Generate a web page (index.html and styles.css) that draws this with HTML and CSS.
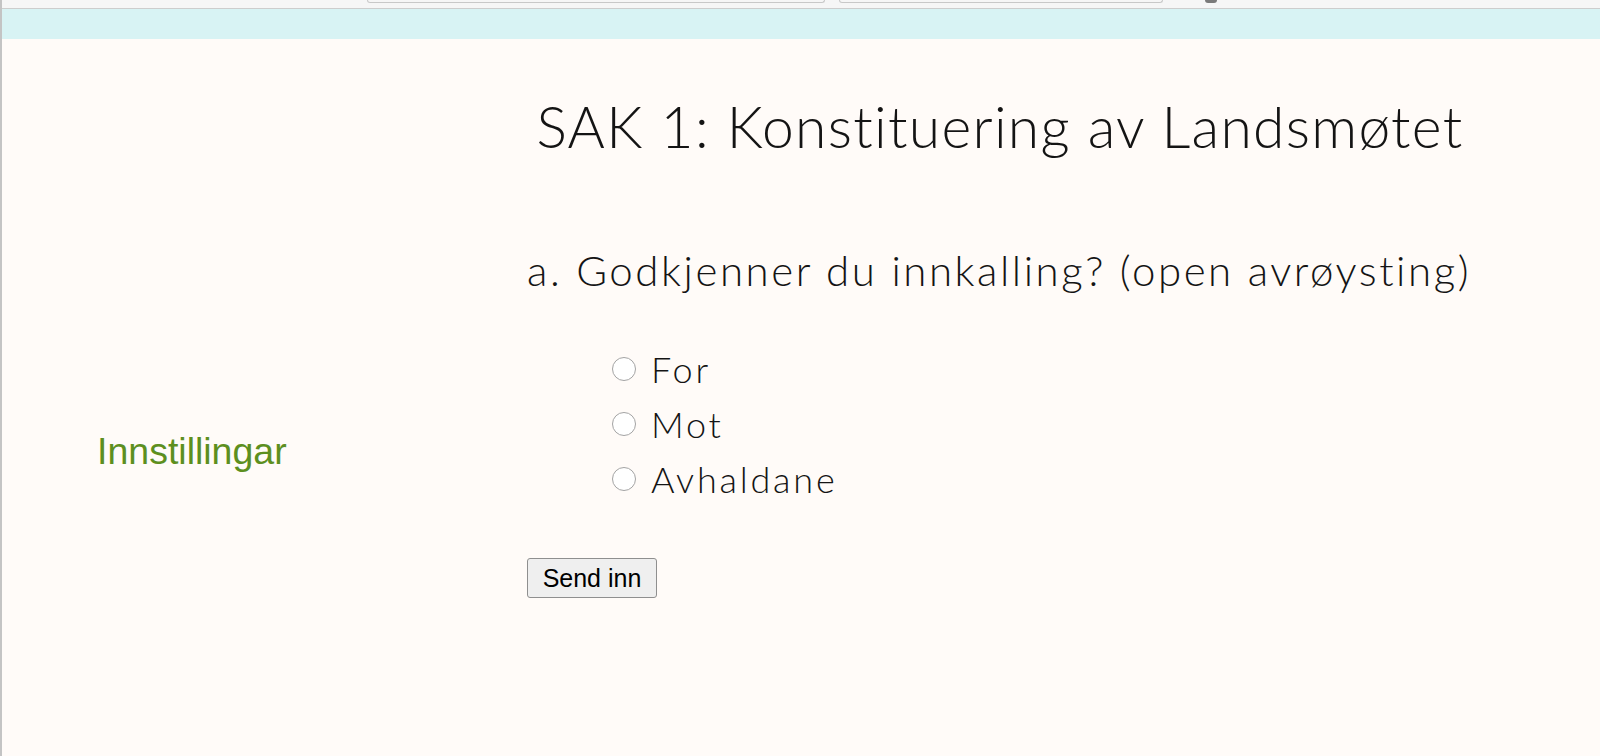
FILE: index.html
```html
<!DOCTYPE html>
<html lang="nn">
<head>
<meta charset="utf-8">
<title>SAK 1: Konstituering av Landsmøtet</title>
<link rel="stylesheet" href="styles.css">
</head>
<body>
<div class="frame">
  <div class="chrome">
    <span class="tab tab-a"></span>
    <span class="tab tab-b"></span>
    <span class="dot"></span>
  </div>
  <div class="band"></div>
  <div class="page">
    <aside class="side">
      <a class="side-link" href="#">Innstillingar</a>
    </aside>
    <main class="main">
      <h1 class="title">SAK 1: Konstituering av Landsmøtet</h1>
      <form class="vote">
        <h2 class="question">a. Godkjenner du innkalling? (open avrøysting)</h2>
        <div class="options">
          <label class="option"><input type="radio" name="a" class="radio"><span>For</span></label>
          <label class="option"><input type="radio" name="a" class="radio"><span>Mot</span></label>
          <label class="option"><input type="radio" name="a" class="radio"><span>Avhaldane</span></label>
        </div>
        <button type="button" class="submit">Send inn</button>
      </form>
    </main>
  </div>
</div>
</body>
</html>
```
FILE: styles.css
```css
* { box-sizing: border-box; }
html, body { margin: 0; padding: 0; height: 100%; }
body { background: #fffbf8; overflow: hidden; }

.frame {
  height: 756px;
  border-left: 2px solid #c4c4c4;
  display: flex;
  flex-direction: column;
}

.chrome {
  height: 9px;
  background: #f6f6f6;
  border-bottom: 1px solid #cdcdcd;
  display: flex;
  align-items: flex-start;
  padding-left: 365px;
  gap: 14px;
}
.tab {
  height: 3px;
  background: #f6f6f6;
  border: 1px solid #c8c8c8;
  border-top: none;
  border-radius: 0 0 4px 4px;
}
.tab-a { width: 458px; }
.tab-b { width: 324px; }
.dot {
  width: 12px;
  height: 3px;
  margin-left: 28px;
  border-radius: 0 0 6px 6px;
  background: #7a7a7a;
}

.band {
  height: 30px;
  background: #d8f3f4;
}

.page {
  flex: 1;
  display: flex;
}

.side {
  width: 525px;
  padding-left: 95px;
  padding-top: 391px;
}
.side-link {
  font-family: "Liberation Sans", Arial, sans-serif;
  font-size: 37.5px;
  line-height: 42px;
  color: #5d8f1f;
  text-decoration: none;
}

.main {
  width: 946px;
  font-family: Lato, "Open Sans", sans-serif;
  font-weight: 300;
  color: #141414;
}

.title {
  margin: 53px 0 0;
  font-size: 57px;
  line-height: 68px;
  font-weight: 300;
  letter-spacing: 1.3px;
  text-align: center;
}

.vote { margin: 0; }

.question {
  margin: 86px 0 0;
  font-size: 42px;
  line-height: 48px;
  font-weight: 300;
  letter-spacing: 2.55px;
  white-space: nowrap;
}

.options {
  margin-top: 47px;
  padding-left: 85px;
  display: flex;
  flex-direction: column;
}
.option {
  display: flex;
  align-items: center;
  gap: 15px;
  height: 55px;
  font-size: 36px;
  font-weight: 300;
  letter-spacing: 2.8px;
}
.radio {
  appearance: none;
  -webkit-appearance: none;
  margin: 0;
  width: 24px;
  height: 24px;
  border-radius: 50%;
  border: 1px solid #a3a3a3;
  background: #ffffff;
}

.submit {
  margin-top: 52px;
  width: 130px;
  height: 40px;
  padding: 0;
  font-family: "Liberation Sans", Arial, sans-serif;
  font-size: 25px;
  color: #000;
  background: #efefef;
  border: 1px solid #8f8f8f;
  border-radius: 3px;
}
```
